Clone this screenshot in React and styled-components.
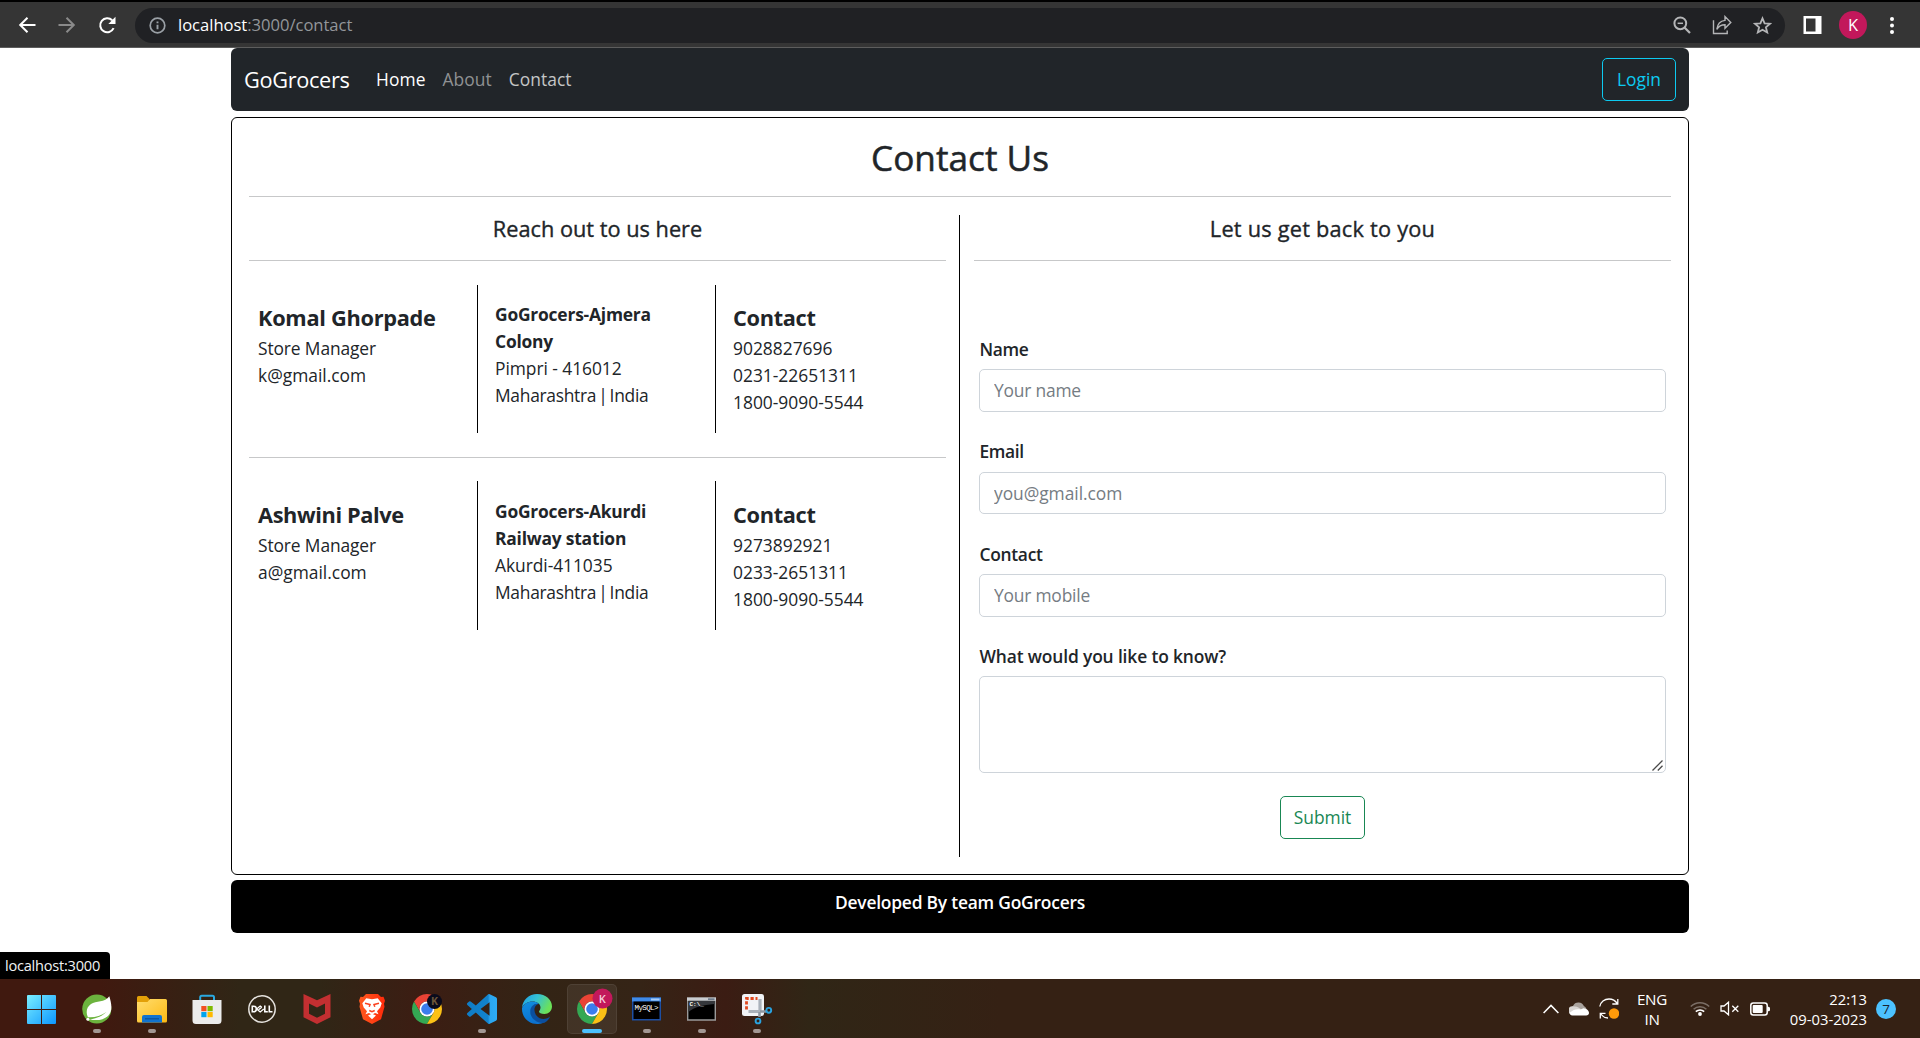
import React from "react";
import styled, { createGlobalStyle } from "styled-components";

const GlobalStyle = createGlobalStyle`
  *, *::before, *::after { box-sizing: border-box; }
  body {
    margin: 0;
    background: #fff;
    color: #212529;
    font-family: "Open Sans", "Noto Sans", sans-serif;
    font-size: 17.4px;
    line-height: 27px;
    overflow: hidden;
  }
`;

const Screen = styled.div`
  display: flex;
  flex-direction: column;
  width: 1920px;
  height: 1038px;
`;

/* ---------- Browser toolbar ---------- */

const Toolbar = styled.header`
  display: flex;
  align-items: center;
  height: 48px;
  padding: 2px 0 1px 18px;
  background: #353535;
  border-top: 2px solid #000;
  border-bottom: 1px solid #5d5d5d;
  color: #fff;
`;

const NavIcons = styled.div`
  display: flex;
  gap: 22px;
  width: 117px;
`;

const Address = styled.div`
  display: flex;
  align-items: center;
  width: 1650px;
  height: 35px;
  padding: 0 13px 0 14px;
  border-radius: 18px;
  background: #202124;
  color: #9aa0a6;
`;

const Url = styled.div`
  flex: 1;
  margin-left: 12px;
  font-size: 16.6px;
  line-height: 24px;
  letter-spacing: -0.03px;
  color: #93969a;
`;

const Host = styled.span`
  color: #fff;
`;

const AddressActions = styled.div`
  display: flex;
  align-items: center;
  gap: 21px;
  color: #b4b5b7;
`;

const BrowserActions = styled.div`
  display: flex;
  align-items: center;
  margin-left: 18px;
`;

const Avatar = styled.div`
  display: flex;
  align-items: center;
  justify-content: center;
  width: 28px;
  height: 28px;
  margin: 0 23px 0 17px;
  padding-bottom: 1px;
  border-radius: 50%;
  background: #c2185b;
  font-size: 16.5px;
  line-height: 20px;
`;

/* ---------- Page ---------- */

const Viewport = styled.main`
  position: relative;
  flex: 1;
  display: flex;
  flex-direction: column;
  align-items: center;
`;

const Navbar = styled.nav`
  display: flex;
  align-items: center;
  width: 1458px;
  height: 63px;
  padding: 0 13px;
  border-radius: 6px;
  background: #212529;
`;

const Brand = styled.a`
  margin-right: 26.5px;
  font-size: 21.75px;
  letter-spacing: -0.33px;
  color: #fff;
`;

const NavLink = styled.a`
  margin-right: 17px;
  letter-spacing: 0.05px;
  color: ${(p) => p.$color};
`;

const Button = styled.button`
  display: block;
  width: ${(p) => p.$width}px;
  height: 43px;
  padding: 0;
  border: 1px solid ${(p) => p.$color};
  border-radius: 5px;
  background: transparent;
  color: ${(p) => p.$color};
  font: inherit;
`;

const LoginButton = styled(Button)`
  margin-left: auto;
`;

const Card = styled.section`
  width: 1458px;
  height: 758px;
  margin-top: 6px;
  padding: 17px;
  border: 1px solid #000;
  border-radius: 6px;
`;

const Title = styled.h1`
  height: 61px;
  margin: 0;
  font-size: 35.2px;
  font-weight: 500;
  -webkit-text-stroke: 0.5px #212529;
  line-height: 44px;
  text-align: center;
`;

const Rule = styled.hr`
  height: 1px;
  margin: 0;
  border: 0;
  background: #c7c8c9;
`;

const Columns = styled.div`
  display: flex;
  height: 642px;
  margin-top: 18px;
`;

const LeftColumn = styled.div`
  width: 710px;
  padding-right: 13px;
`;

const RightColumn = styled.div`
  width: 712px;
  padding-left: 14px;
  border-left: 1px solid #000;
`;

const Subtitle = styled.h2`
  height: 45px;
  margin: 0;
  font-size: 21.75px;
  font-weight: 500;
  -webkit-text-stroke: 0.35px #212529;
  line-height: 27px;
  letter-spacing: ${(p) => p.$spacing || 0}px;
  text-align: center;
`;

const StoreRow = styled.div`
  display: grid;
  grid-template-columns: 228px 238px 231px;
  height: ${(p) => (p.$last ? 149 : 148)}px;
  margin: ${(p) => (p.$last ? 23 : 24)}px 0 24px;
`;

const StoreCell = styled.div`
  padding: ${(p) => (p.$last ? 20 : 19)}px 10px 0 ${(p) => (p.$divided ? 17 : 9)}px;
  border-left: ${(p) => (p.$divided ? "1px solid #000" : "0")};
`;

const AddressCell = styled(StoreCell)`
  padding-top: ${(p) => (p.$last ? 17 : 16)}px;
`;

const Heading = styled.h3`
  margin: 0 0 4px;
  font-size: 21.75px;
  font-weight: 700;
  line-height: 27px;
  letter-spacing: ${(p) => p.$spacing}px;
  white-space: nowrap;
`;

const Line = styled.div`
  font-weight: ${(p) => (p.$bold ? 700 : 400)};
  letter-spacing: ${(p) => p.$spacing || 0}px;
  word-spacing: ${(p) => p.$words || 0}px;
  white-space: nowrap;
`;

const Form = styled.form`
  display: flex;
  flex-direction: column;
  padding: 75px 5px 0;
`;

const Field = styled.div`
  display: flex;
  flex-direction: column;
  gap: 6.3px;
  margin-bottom: ${(p) => p.$after || 26.35}px;
`;

const Label = styled.label`
  padding-left: 0.5px;
  font-weight: 600;
  letter-spacing: ${(p) => p.$spacing || -0.2}px;
`;

const Input = styled.input`
  height: 42.75px;
  padding: 0 14px 1px;
  border: 1px solid #ced4da;
  border-radius: 5px;
  font: inherit;
  letter-spacing: ${(p) => p.$spacing || -0.2}px;
  &::placeholder { color: #757c83; opacity: 1; }
`;

const TextAreaBox = styled.div`
  position: relative;
  display: flex;
`;

const TextArea = styled.textarea`
  flex: 1;
  height: 97px;
  padding: 7px 14px;
  border: 1px solid #ced4da;
  border-radius: 5px;
  font: inherit;
  resize: none;
`;

const Grip = styled.svg`
  position: absolute;
  right: 3px;
  bottom: 2px;
`;

const SubmitButton = styled(Button)`
  align-self: center;
`;

const Footer = styled.footer`
  width: 1458px;
  height: 53px;
  margin-top: 5px;
  padding-top: 9px;
  border-radius: 6px;
  background: #000;
  color: #fff;
  font-weight: 600;
  letter-spacing: -0.21px;
  text-align: center;
`;

const StatusBubble = styled.div`
  position: absolute;
  left: 0;
  bottom: 0;
  width: 110px;
  height: 27px;
  padding-left: 5px;
  border-radius: 0 4px 0 0;
  background: #000;
  color: #f1f3f4;
  font-size: 14.6px;
  line-height: 27px;
  letter-spacing: -0.24px;
`;

/* ---------- Taskbar ---------- */

const Taskbar = styled.footer`
  display: flex;
  justify-content: space-between;
  height: 59px;
  padding: 0 24px 0 14px;
  background: linear-gradient(90deg, #40190f 0, #40190f 100px, #302616 240px, #302616 320px, #3c1d13 420px, #332415 540px, #352416 640px, #3b1c13 725px, #302616 810px, #352114 1000px, #352114 1920px);
  color: #fff;
`;

const Apps = styled.div`
  display: flex;
  align-items: flex-start;
`;

const Slot = styled.div`
  position: relative;
  display: flex;
  justify-content: center;
  width: 50px;
  height: 50px;
  margin: 5px 2.5px 0;
  padding-top: 9px;
  border-radius: 5px;
  border: 1px solid ${(p) => (p.$active ? "rgba(255,255,255,0.07)" : "transparent")};
  background: ${(p) => (p.$active ? "rgba(255,255,255,0.07)" : "none")};
`;

const Indicator = styled.span`
  position: absolute;
  bottom: 0;
  left: 50%;
  width: ${(p) => (p.$active ? 20 : 8)}px;
  height: 4px;
  transform: translateX(-50%);
  border-radius: 2px;
  background: ${(p) => (p.$active ? "#4cc2ff" : "#a29793")};
`;

const Tray = styled.div`
  display: flex;
  align-items: center;
  font-size: 14.8px;
  line-height: 20px;
`;

const TrayIcons = styled.div`
  display: flex;
  align-items: center;
  gap: 10px;
`;

const Language = styled.div`
  width: 71px;
  padding-right: 5px;
  text-align: center;
  font-size: 15.2px;
  letter-spacing: -0.3px;
`;

const Clock = styled.div`
  width: 97px;
  text-align: right;
`;

const Badge = styled.div`
  width: 20px;
  height: 20px;
  margin-left: 9px;
  border-radius: 50%;
  background: #4cc2ff;
  color: #1a2430;
  font-size: 13.5px;
  line-height: 20px;
  text-align: center;
`;

/* ---------- Toolbar icons ---------- */

const Stroke = ({ size = 18, width = 2, children, ...rest }) => (
  <svg width={size} height={size} viewBox={`0 0 ${size} ${size}`} fill="none" stroke="currentColor" strokeWidth={width} {...rest}>
    {children}
  </svg>
);

const BackIcon = () => (
  <Stroke><path d="M17.5 9H2.5M9.5 1.7 2.2 9l7.3 7.3" /></Stroke>
);
const ForwardIcon = () => (
  <Stroke color="#8a8a8a"><path d="M.5 9h15M8.500 1.700 15.800 9l-7.300 7.300" /></Stroke>
);
const ReloadIcon = () => (
  <Stroke>
    <path d="M15.600 12.200A7 7 0 1 1 14.200 4.300" />
    <path d="M17.500.8V8h-7.200z" fill="currentColor" stroke="none" />
  </Stroke>
);
const InfoIcon = () => (
  <Stroke size={17} width={1.700}>
    <circle cx="8.500" cy="8.500" r="7.300" />
    <path d="M8.500 7.700v4.600M8.500 4.600v1.700" strokeWidth="1.900" />
  </Stroke>
);
const ZoomOutIcon = () => (
  <Stroke>
    <circle cx="7.300" cy="7.300" r="5.900" />
    <path d="M4.600 7.300h5.400" strokeWidth="1.500" />
    <path d="m11.500 11.500 5.500 5.500" strokeWidth="2.200" />
  </Stroke>
);
const ShareIcon = () => (
  <Stroke size={20} width={1.400}>
    <path d="M1.500 5.200v13.300h13.700v-3" />
    <path d="M4.800 14.400c.6-5 3-8.400 8.200-9V1.600l5.800 5.900-5.800 5.800V9.700c-3.700 0-6.400 1.500-8.200 4.700z" />
  </Stroke>
);
const StarIcon = () => (
  <Stroke size={19} width={1.800}>
    <path d="m9.500 2.300 2.100 5 5.400.4-4.100 3.500 1.300 5.300-4.700-2.800-4.700 2.800 1.300-5.300L2 7.700l5.400-.4z" />
  </Stroke>
);
const PanelIcon = () => (
  <svg width="19" height="18" viewBox="0 0 19 18">
    <path d="M.5 0h18v18H.5zM3 2.500v13h9.500v-13z" fill="#fff" fillRule="evenodd" />
  </svg>
);
const MenuIcon = () => (
  <svg width="4" height="17" viewBox="0 0 4 17" fill="#fff">
    <circle cx="2" cy="2" r="2" /><circle cx="2" cy="8.500" r="2" /><circle cx="2" cy="15" r="2" />
  </svg>
);

/* ---------- App icons, all drawn in a 30px box ---------- */

const AppSvg = ({ children }) => (
  <svg width="30" height="30" viewBox="0 0 30 30" overflow="visible">{children}</svg>
);

const WindowsIcon = () => (
  <AppSvg>
    <defs>
      <linearGradient id="win" x1="0" y1="0" x2="30" y2="30" gradientUnits="userSpaceOnUse">
        <stop offset="0" stopColor="#7cf0ff" /><stop offset="1" stopColor="#0a95ff" />
      </linearGradient>
    </defs>
    <path d="M0 2a1 1 0 0 1 1-1h13v14H0zM15 1h13a1 1 0 0 1 1 1v13H15zM0 16h14v14H1a1 1 0 0 1-1-1zM15 16h14v13a1 1 0 0 1-1 1H15z" fill="url(#win)" />
  </AppSvg>
);
const SpringIcon = () => (
  <AppSvg>
    <circle cx="14.800" cy="15" r="14.600" fill="#6cb33e" />
    <path d="M27.300 2.200C29.500 9 31 17 26.200 21.700c-4.400 4.500-11.800 5.200-18.500 3.700 5.500-.5 11.500-2.600 16.700-7.400-5.500 4-11.500 5.600-18.500 5.200C3.600 18.600 4.500 13 9 10 14 6.800 23 8.500 27.300 2.200z" fill="#fff" />
    <circle cx="5.900" cy="25.300" r="1.500" fill="#fff" />
  </AppSvg>
);
const FolderIcon = () => (
  <AppSvg>
    <defs>
      <linearGradient id="fold" x1="0" y1="0" x2="1" y2="1">
        <stop offset="0" stopColor="#ffdd6e" /><stop offset="1" stopColor="#fdb913" />
      </linearGradient>
    </defs>
    <path d="M0 3.500A1.500 1.500 0 0 1 1.500 2h8L12.500 5v5H0z" fill="#e3a008" />
    <path d="M0 8h10.500l2.500-3h15.500A1.500 1.500 0 0 1 30 6.500V27a1.500 1.500 0 0 1-1.500 1.500h-27A1.500 1.500 0 0 1 0 27z" fill="url(#fold)" />
    <path d="M5 28.500V23a2 2 0 0 1 2-2h16a2 2 0 0 1 2 2v5.500z" fill="#1173cf" />
    <path d="M8 24.800h14" stroke="#0a4f96" strokeWidth="1.200" />
  </AppSvg>
);
const StoreIcon = () => (
  <AppSvg>
    <path d="M8.200 6.500V3.200a1.500 1.500 0 0 1 1.500-1.500h10.800A1.500 1.500 0 0 1 22 3.200v3.300" fill="none" stroke="#2aa9e0" strokeWidth="2" />
    <path d="M.5 6h29v20.500A3.500 3.500 0 0 1 26 30H4a3.500 3.500 0 0 1-3.500-3.500z" fill="#ececec" />
    <path d="M9.300 12h5.200v5.200H9.300z" fill="#f25022" /><path d="M15.500 12h5.200v5.200h-5.200z" fill="#7fba00" />
    <path d="M9.300 18h5.200v5.200H9.300z" fill="#00a4ef" /><path d="M15.500 18h5.200v5.200h-5.200z" fill="#ffb900" />
  </AppSvg>
);
const DellIcon = () => (
  <AppSvg>
    <circle cx="15" cy="15" r="13.200" fill="none" stroke="#e5e2de" strokeWidth="1.500" />
    <g fill="none" stroke="#fff" strokeWidth="1.600">
      <path d="M5.300 12.300v5.400h1.500c3.400 0 3.400-5.400 0-5.400z" />
      <path d="m9.600 15 3.600-2.900 1.600 1.200M9.600 15l3.600 2.900 3.600-2.800M11.600 15.700l3.400-2.600" strokeWidth="1.300" />
      <path d="M17.800 11.500v6.200h3M22.300 11.500v6.200h3.200" />
    </g>
  </AppSvg>
);
const McAfeeIcon = () => (
  <AppSvg>
    <path d="M1.500 0 15 6.300 28.500 0v23.300L15 30 1.500 23.300zM7 9.500v10.200l8 4 8-4V9.500l-8 4z" fill="#c32f31" fillRule="evenodd" />
  </AppSvg>
);
const BraveIcon = () => (
  <AppSvg>
    <defs>
      <linearGradient id="brave" x1="0" y1="0" x2="1" y2="0">
        <stop offset="0" stopColor="#ff5a1f" /><stop offset="1" stopColor="#ff2a0a" />
      </linearGradient>
    </defs>
    <path d="M9 0h12l3 3 2.500-.2 1.500 4-1 3 .5 3-3.500 12.500L15 30 6 25.300 2.500 12.800l.5-3-1-3 1.500-4L6 3z" fill="url(#brave)" />
    <path d="m9.300 4.300 5.700 1 5.700-1 4 5-1.400 4.200-3.300 3.700 1.500 3L18 19l-3 1.800L12 19l-3.500 1.200 1.500-3-3.300-3.700-1.400-4.200z" fill="#fff" />
    <path d="m11 21.500 4-1.700 4 1.700-4 3.700z" fill="#fff" />
    <path d="m8 9.300 5 1.200-.8 2.200M22 9.300l-5 1.200.8 2.200M12.300 16.500l2.700 1.200 2.700-1.200" fill="none" stroke="#fb3f1d" strokeWidth="1.500" />
  </AppSvg>
);
const ChromeGlyph = () => (
  <g transform="scale(.625)">
    <path d="M24 12h20.780A24 24 0 0 0 3.220 12l10.380 18A12 12 0 0 1 24 12z" fill="#ea4335" />
    <path d="M3.220 12A24 24 0 0 0 24 48l10.390-18A12 12 0 0 1 13.600 30z" fill="#34a853" />
    <path d="M44.780 12A24 24 0 0 1 24 48l10.390-18A12 12 0 0 0 24 12z" fill="#fbc116" />
    <circle cx="24" cy="24" r="12" fill="#fff" />
    <circle cx="24" cy="24" r="9.300" fill="#3b7ded" />
  </g>
);
const ChromeDarkIcon = () => (
  <AppSvg>
    <ChromeGlyph />
    <circle cx="22.500" cy="7.500" r="7.500" fill="#0a0b1c" />
    <text x="22.500" y="11.300" fontSize="10.500" fontWeight="700" textAnchor="middle" fill="#6d5638">K</text>
  </AppSvg>
);
const ChromeActiveIcon = () => (
  <AppSvg>
    <ChromeGlyph />
    <circle cx="25.500" cy="4.500" r="10" fill="#c2185b" />
    <text x="25.300" y="8.500" fontSize="11" fontWeight="600" textAnchor="middle" fill="#f5cfdd">K</text>
  </AppSvg>
);
const CodeIcon = () => (
  <AppSvg>
    <defs>
      <linearGradient id="code" x1="0" y1="0" x2="1" y2="0">
        <stop offset="0" stopColor="#0f7cc6" /><stop offset=".7" stopColor="#1283cd" /><stop offset=".76" stopColor="#2ba5ee" /><stop offset="1" stopColor="#2dabf5" />
      </linearGradient>
    </defs>
    <path transform="scale(1.250)" fill="url(#code)" d="M23.150 2.587 18.210.21a1.494 1.494 0 0 0-1.705.29l-9.460 8.630-4.120-3.128a.999.999 0 0 0-1.276.057L.327 7.261A1 1 0 0 0 .326 8.740L3.899 12 .326 15.260a1 1 0 0 0 .001 1.479L1.650 17.940a.999.999 0 0 0 1.276.057l4.120-3.128 9.460 8.630a1.492 1.492 0 0 0 1.704.290l4.942-2.377A1.500 1.500 0 0 0 24 20.060V3.939a1.500 1.500 0 0 0-.850-1.352zm-5.146 14.861L10.826 12l7.178-5.448v10.896z" />
  </AppSvg>
);
const EdgeIcon = () => (
  <AppSvg>
    <defs>
      <linearGradient id="edgeTop" x1="0" y1="0" x2="1" y2=".4">
        <stop offset="0" stopColor="#1c9ee8" /><stop offset=".5" stopColor="#34c1d4" /><stop offset="1" stopColor="#6be15a" />
      </linearGradient>
      <linearGradient id="edgeBody" x1="0" y1="0" x2=".3" y2="1">
        <stop offset="0" stopColor="#118fe0" /><stop offset="1" stopColor="#0c72cf" />
      </linearGradient>
    </defs>
    <path d="M0 14C.5 6 7 0 15 0c9 0 15 6 15 12.500 0 4.500-3.500 7.500-7.500 7.500-3.500 0-5.500-1.200-5.500-2.300 0-.7 1.500-1.700 1.500-4.200 0-3.500-3.500-6-8-6C6 7.500 1.500 10 0 14z" fill="url(#edgeTop)" />
    <path d="M12.500 14.500C11.800 20 16 25 21.500 25c2.500 0 5-1 6.500-2.500-1.500 4-4.500 6.500-8 6.800C13.500 29.500 8 24 8 17.500 8 12.500 12 9 17 9.800c-2.500.7-4 2.200-4.500 4.700z" fill="#0b4f9f" />
    <path d="M0 14.200C1.500 10 6 7.500 10.500 7.500c2.500 0 4.700.8 6.300 2.300C12 9.300 8.300 12.800 8.300 17.500c0 6 5.200 11 12 11.500-1.800.7-3.300 1-5.300 1C6.500 30 0 23.300 0 15z" fill="url(#edgeBody)" />
  </AppSvg>
);
const MySqlIcon = () => (
  <AppSvg>
    <path d="M0 3.500h29v23H0z" fill="#1d4fa3" />
    <path d="M0 3.500h29v4H0z" fill="#3f8be8" /><path d="M19 4.500h8.500v2H19z" fill="#a9cdf8" />
    <path d="M1.500 7.500h26v17.500h-26z" fill="#000" />
    <text x="2.500" y="16.200" fontSize="7.500" fontFamily="Liberation Mono, monospace" textLength="24" fill="#fff">MySQL&gt;</text>
  </AppSvg>
);
const TerminalIcon = () => (
  <AppSvg>
    <path d="M.7 4.200h27.600v21.800H.7z" fill="#000" stroke="#9a9a9a" strokeWidth="1.400" />
    <path d="M0 3.500h29v3.300H0z" fill="#c9ccd0" /><path d="M21 4.300h6.500v1.700H21z" fill="#6d7b8c" />
    <path d="M1.500 7h26v3c-12 1-20 3-26 8z" fill="#35373b" />
    <text x="2.500" y="12" fontSize="6" fontFamily="Liberation Mono, monospace" fontWeight="700" fill="#fff">C:\_</text>
  </AppSvg>
);
const SnipIcon = () => (
  <AppSvg>
    <rect x="0" y="0" width="22" height="22" rx="2.500" fill="#f1f3f6" />
    <path d="M4.500 15.500V4.500h11" fill="none" stroke="#e0481f" strokeWidth="2.800" strokeDasharray="3.200 1.800" />
    <path d="M18 5v12.500M6.500 17.500H18" stroke="#a9b1ba" strokeWidth="3.200" fill="none" />
    <path d="M18 17.500h6M17.500 18v5" stroke="#8e98a3" strokeWidth="2.600" fill="none" />
    <circle cx="26.800" cy="16.300" r="2.400" fill="none" stroke="#29a3e0" strokeWidth="1.900" />
    <circle cx="16" cy="27" r="2.400" fill="none" stroke="#29a3e0" strokeWidth="1.900" />
  </AppSvg>
);

const APPS = [
  { Icon: WindowsIcon },
  { Icon: SpringIcon, open: true },
  { Icon: FolderIcon, open: true },
  { Icon: StoreIcon },
  { Icon: DellIcon },
  { Icon: McAfeeIcon },
  { Icon: BraveIcon },
  { Icon: ChromeDarkIcon },
  { Icon: CodeIcon, open: true },
  { Icon: EdgeIcon },
  { Icon: ChromeActiveIcon, open: true, active: true },
  { Icon: MySqlIcon, open: true },
  { Icon: TerminalIcon, open: true },
  { Icon: SnipIcon, open: true },
];

/* ---------- Tray icons ---------- */

const ChevronUp = () => (
  <svg width="16" height="10" viewBox="0 0 16 10" fill="none" stroke="#fff" strokeWidth="1.500"><path d="m.6 9 7.400-7.600L15.400 9" /></svg>
);
const CloudIcon = () => (
  <svg width="20" height="14" viewBox="0 0 20 14">
    <path d="M4.500 12A4.200 4.200 0 0 1 4 4 6 6 0 0 1 15 4.300 4.500 4.500 0 0 1 16 12z" fill="#a9a29d" />
    <path d="M5 4.500C8 4 10 5.500 12.500 7.500L2 12.500A4.200 4.200 0 0 1 5 4.500z" fill="#d8d5d3" />
    <path d="M3.500 13.500C1.500 13.500.5 12 1 10.500c3-3 7-4 10.500-3l3-1.200c3 .2 5.500 2.200 5.500 4.700 0 1.500-1.200 2.500-2.800 2.500z" fill="#fff" />
  </svg>
);
const SyncIcon = () => (
  <svg width="20" height="21" viewBox="0 0 20 21" fill="none" stroke="#fff" strokeWidth="1.300">
    <path d="M.8 8.500C1.500 4 5.500 1 10 1c3.800 0 6.500 1.800 8.300 4.700M18.800 1v5h-5.500M9 20c-3 0-5.500-1.500-7.500-4.500M1.300 20.500v-5.200h5.200" />
    <circle cx="15" cy="15.500" r="5.200" fill="#ff9a0a" stroke="none" />
  </svg>
);
const WifiIcon = () => (
  <svg width="20" height="15" viewBox="0 0 20 15" fill="none" stroke="#fff" strokeWidth="1.500">
    <path d="M.8 5.500a13 13 0 0 1 18.400 0M3.600 8.300a9 9 0 0 1 12.800 0" opacity=".35" />
    <path d="M5.800 10.600a6 6 0 0 1 8.400 0" /><circle cx="10" cy="13" r="1.900" fill="#fff" stroke="none" />
  </svg>
);
const MuteIcon = () => (
  <svg width="20" height="15" viewBox="0 0 20 15" fill="none" stroke="#fff" strokeWidth="1.300">
    <path d="M1 5v5h3l4.500 3.800V1.200L4 5zM12.300 4.800l6 6M18.300 4.800l-6 6" />
  </svg>
);
const BatteryIcon = () => (
  <svg width="20" height="14" viewBox="0 0 20 14">
    <rect x=".8" y="1" width="16.400" height="12" rx="2.500" fill="none" stroke="#fff" strokeWidth="1.500" />
    <rect x="2.700" y="3" width="10" height="8" rx="1" fill="#fff" /><path d="M17.500 4.800h1a1.500 1.500 0 0 1 1.500 1.500v1.500a1.500 1.500 0 0 1-1.500 1.500h-1z" fill="#fff" />
  </svg>
);

/* ---------- Content ---------- */

const STORES = [
  {
    manager: "Komal Ghorpade", spacing: -0.28, email: "k@gmail.com",
    place: ["GoGrocers-Ajmera", "Colony"], area: "Pimpri - 416012",
    phones: ["9028827696", "0231-22651311", "1800-9090-5544"],
  },
  {
    manager: "Ashwini Palve", spacing: -0.38, email: "a@gmail.com",
    place: ["GoGrocers-Akurdi", "Railway station"], area: "Akurdi-411035",
    phones: ["9273892921", "0233-2651311", "1800-9090-5544"],
  },
];

const Store = ({ store, last }) => (
  <StoreRow $last={last}>
    <StoreCell $last={last}>
      <Heading $spacing={store.spacing}>{store.manager}</Heading>
      <Line $spacing={-0.12}>Store Manager</Line>
      <Line>{store.email}</Line>
    </StoreCell>
    <AddressCell $last={last} $divided>
      {store.place.map((text) => <Line key={text} $bold $spacing={-0.2}>{text}</Line>)}
      <Line $spacing={-0.05}>{store.area}</Line>
      <Line $spacing={-0.28} $words={-2.2}>Maharashtra | India</Line>
    </AddressCell>
    <StoreCell $last={last} $divided>
      <Heading $spacing={-0.33}>Contact</Heading>
      {store.phones.map((text) => <Line key={text}>{text}</Line>)}
    </StoreCell>
  </StoreRow>
);

export default function App() {
  return (
    <Screen>
      <GlobalStyle />
      <Toolbar>
        <NavIcons><BackIcon /><ForwardIcon /><ReloadIcon /></NavIcons>
        <Address>
          <InfoIcon />
          <Url><Host>localhost</Host>:3000/contact</Url>
          <AddressActions><ZoomOutIcon /><ShareIcon /><StarIcon /></AddressActions>
        </Address>
        <BrowserActions><PanelIcon /><Avatar>K</Avatar><MenuIcon /></BrowserActions>
      </Toolbar>

      <Viewport>
        <Navbar>
          <Brand>GoGrocers</Brand>
          <NavLink $color="#fff">Home</NavLink>
          <NavLink $color="#8f9193">About</NavLink>
          <NavLink $color="#c4c5c6">Contact</NavLink>
          <LoginButton $width={74} $color="#0dcaf0">Login</LoginButton>
        </Navbar>

        <Card>
          <Title>Contact Us</Title>
          <Rule />
          <Columns>
            <LeftColumn>
              <Subtitle>Reach out to us here</Subtitle>
              <Rule />
              <Store store={STORES[0]} />
              <Rule />
              <Store store={STORES[1]} last />
            </LeftColumn>
            <RightColumn>
              <Subtitle $spacing={0.22}>Let us get back to you</Subtitle>
              <Rule />
              <Form>
                <Field><Label $spacing={-0.35}>Name</Label><Input placeholder="Your name" /></Field>
                <Field><Label $spacing={-0.35}>Email</Label><Input $spacing={-0.05} placeholder="you@gmail.com" /></Field>
                <Field><Label $spacing={-0.3}>Contact</Label><Input placeholder="Your mobile" /></Field>
                <Field $after={23}>
                  <Label $spacing={-0.14}>What would you like to know?</Label>
                  <TextAreaBox>
                    <TextArea />
                    <Grip width="11" height="11" viewBox="0 0 11 11" fill="none" stroke="#4a4a4a" strokeWidth="1.3">
                      <path d="M.5 10.500 10.500.5M5.800 10.500l4.700-4.700" />
                    </Grip>
                  </TextAreaBox>
                </Field>
                <SubmitButton type="button" $width={85} $color="#198754">Submit</SubmitButton>
              </Form>
            </RightColumn>
          </Columns>
        </Card>

        <Footer>Developed By team GoGrocers</Footer>
        <StatusBubble>localhost:3000</StatusBubble>
      </Viewport>

      <Taskbar>
        <Apps>
          {APPS.map(({ Icon, open, active }, i) => (
            <Slot key={i} $active={active}>
              <Icon />
              {open && <Indicator $active={active} />}
            </Slot>
          ))}
        </Apps>
        <Tray>
          <TrayIcons><ChevronUp /><CloudIcon /><SyncIcon /></TrayIcons>
          <Language>ENG<br />IN</Language>
          <TrayIcons><WifiIcon /><MuteIcon /><BatteryIcon /></TrayIcons>
          <Clock>22:13<br />09-03-2023</Clock>
          <Badge>7</Badge>
        </Tray>
      </Taskbar>
    </Screen>
  );
}
